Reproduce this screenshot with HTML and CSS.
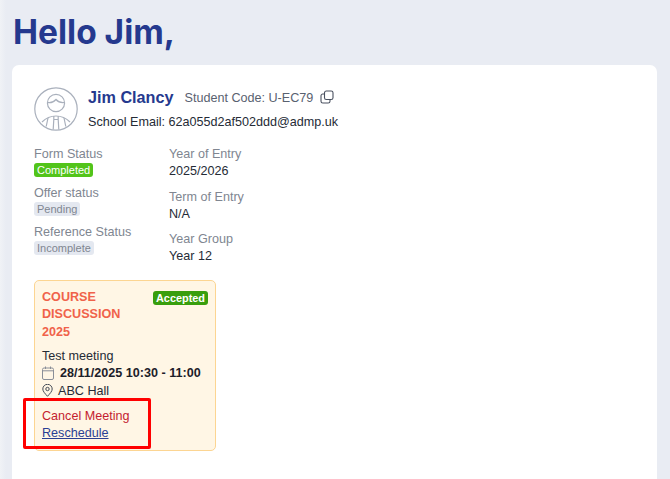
FILE: index.html
```html
<!DOCTYPE html>
<html lang="en">
<head>
<meta charset="utf-8">
<title>Hello Jim</title>
<link rel="stylesheet" href="styles.css">
</head>
<body>
<h1 class="greeting">Hello Jim,</h1>
<main class="card">
  <section class="profile">
    <svg class="avatar" width="44" height="44" viewBox="0 0 44 44" fill="none" stroke="#a9b0bc" stroke-width="1.2">
      <circle cx="22" cy="22" r="21.2"/>
      <circle cx="22" cy="16" r="8.6"/>
      <path d="M13.6 15.5c3 .6 6-.3 8.400-3 2 2.400 5 3.400 8.400 3"/>
      <path d="M8 35c3.800-3.800 8.500-6 14-6s10.200 2.200 14 6"/>
      <path d="M19.800 29v3.500l-.6 10M24.200 29v3.500l.6 10M19.800 32.500h4.400M14 31l-1.800 8.500M30 31l1.800 8.500"/>
    </svg>
    <div class="identity">
      <div class="name-row">
        <span class="name">Jim Clancy</span>
        <span class="code">Student Code: U-EC79</span>
        <svg class="copy" width="14" height="14" viewBox="0 0 14 14" fill="none" stroke="#4a5160" stroke-width="1.100">
          <rect x="4.500" y="1" width="8.500" height="8.500" rx="1.800"/>
          <path d="M4.500 4H2.800A1.800 1.800 0 0 0 1 5.800v5.400A1.800 1.800 0 0 0 2.800 13h5.400A1.800 1.800 0 0 0 10 11.200V9.500"/>
        </svg>
      </div>
      <div class="email">School Email: 62a055d2af502ddd@admp.uk</div>
    </div>
  </section>
  <section class="details">
    <div class="col-status">
      <div class="status"><div class="label">Form Status</div><span class="badge badge-green">Completed</span></div>
      <div class="status"><div class="label">Offer status</div><span class="badge badge-grey">Pending</span></div>
      <div class="status"><div class="label">Reference Status</div><span class="badge badge-grey">Incomplete</span></div>
    </div>
    <div class="col-entry">
      <div class="entry"><div class="label">Year of Entry</div><div class="value">2025/2026</div></div>
      <div class="entry"><div class="label">Term of Entry</div><div class="value">N/A</div></div>
      <div class="entry"><div class="label">Year Group</div><div class="value">Year 12</div></div>
    </div>
  </section>
  <article class="meeting">
    <div class="meeting-head">
      <h2 class="meeting-title">COURSE DISCUSSION 2025</h2>
      <span class="accepted">Accepted</span>
    </div>
    <div class="meeting-line">Test meeting</div>
    <div class="meeting-line">
      <svg class="icon-cal" width="12" height="14" viewBox="0 0 12 14" fill="none" stroke="#8a8f98" stroke-width="1">
        <rect x=".5" y="2" width="11" height="11.500" rx="1.500"/>
        <path d="M.5 4.800h11M3.500 .5v2.500M8.500 .5v2.500"/>
      </svg>
      <strong class="when">28/11/2025 10:30 - 11:00</strong>
    </div>
    <div class="meeting-line">
      <svg class="icon-pin" width="11" height="13" viewBox="0 0 11 13" fill="none" stroke="#444b57" stroke-width="1">
        <path d="M5.500 12.300C3 9.500 .8 7.300 .8 5a4.700 4.700 0 0 1 9.400 0c0 2.300-2.200 4.500-4.700 7.300z"/>
        <circle cx="5.500" cy="5" r="1.700"/>
      </svg>
      <span class="where">ABC Hall</span>
    </div>
    <a class="cancel">Cancel Meeting</a>
    <a class="reschedule" href="#">Reschedule</a>
    <div class="highlight"></div>
  </article>
</main>
</body>
</html>
```

FILE: styles.css
```css
* { box-sizing: border-box; }
body {
  display: flex;
  flex-direction: column;
  height: 100vh;
  margin: 0;
  padding: 0 13px 0 12px;
  overflow: hidden;
  background: linear-gradient(90deg, #f0f2f6, #e9ecf3 6px);
  font-family: "Liberation Sans", Arial, sans-serif;
  font-size: 12.600px;
  color: #252b36;
}
.greeting {
  flex: none;
  margin: 0;
  height: 65px;
  padding: 11px 0 0 1px;
  font-family: Inter, sans-serif;
  font-weight: 700;
  font-size: 33.500px;
  line-height: 42px;
  color: #25398e;
}
.card {
  flex: 1;
  padding: 21px 22px;
  background: #fff;
  border-radius: 7px 7px 0 0;
}
.profile { display: flex; gap: 10px; }
.avatar { flex: none; margin-top: 1px; }
.name-row { display: flex; align-items: center; height: 23px; }
.name { font-size: 16.200px; font-weight: 700; color: #25398e; margin-right: 11px; }
.code { color: #596170; margin-right: 7px; }
.copy { margin-top: -2px; }
.email { margin-top: 4px; line-height: 18px; }
.details { display: flex; margin-top: 15px; }
.col-status { width: 135px; }
.status { height: 39px; }
.label { color: #808691; line-height: 17px; }
.value { line-height: 17px; }
.badge {
  display: block;
  width: fit-content;
  height: 14px;
  padding: 0 3px;
  border-radius: 3px;
  font-size: 11px;
  line-height: 14px;
}
.badge-green { background: #52c41a; color: #fff; }
.badge-grey { background: #e4e8f0; color: #808691; }
.entry { height: 42.500px; }
.meeting {
  position: relative;
  width: 182px;
  height: 171px;
  margin-top: 6px;
  padding: 8px 7px;
  background: #fff6e5;
  border: 1px solid #fcd592;
  border-radius: 5px;
}
.meeting-head { display: flex; justify-content: space-between; align-items: flex-start; }
.meeting-title {
  margin: 0 0 6px;
  width: 100px;
  font-size: 12.600px;
  line-height: 17.500px;
  font-weight: 700;
  color: #f0624a;
}
.accepted {
  margin-top: 2px;
  padding: 0 3px;
  height: 14px;
  border-radius: 3px;
  background: #389e0d;
  color: #fff;
  font-size: 10.900px;
  font-weight: 700;
  line-height: 14px;
}
.meeting-line { display: flex; align-items: center; height: 17.500px; white-space: nowrap; }
.icon-cal { margin-right: 6px; }
.when { font-weight: 700; color: #1c2029; }
.icon-pin { margin-right: 5px; }
.where { color: #252b36; }
.cancel { display: block; margin-top: 7px; line-height: 18px; color: #c41d2f; }
.reschedule { display: block; line-height: 17px; color: #2b3f94; }
.highlight {
  position: absolute;
  left: -12px;
  top: 117px;
  width: 128px;
  height: 51px;
  border: 3px solid #f00;
  border-radius: 2px;
}
```
